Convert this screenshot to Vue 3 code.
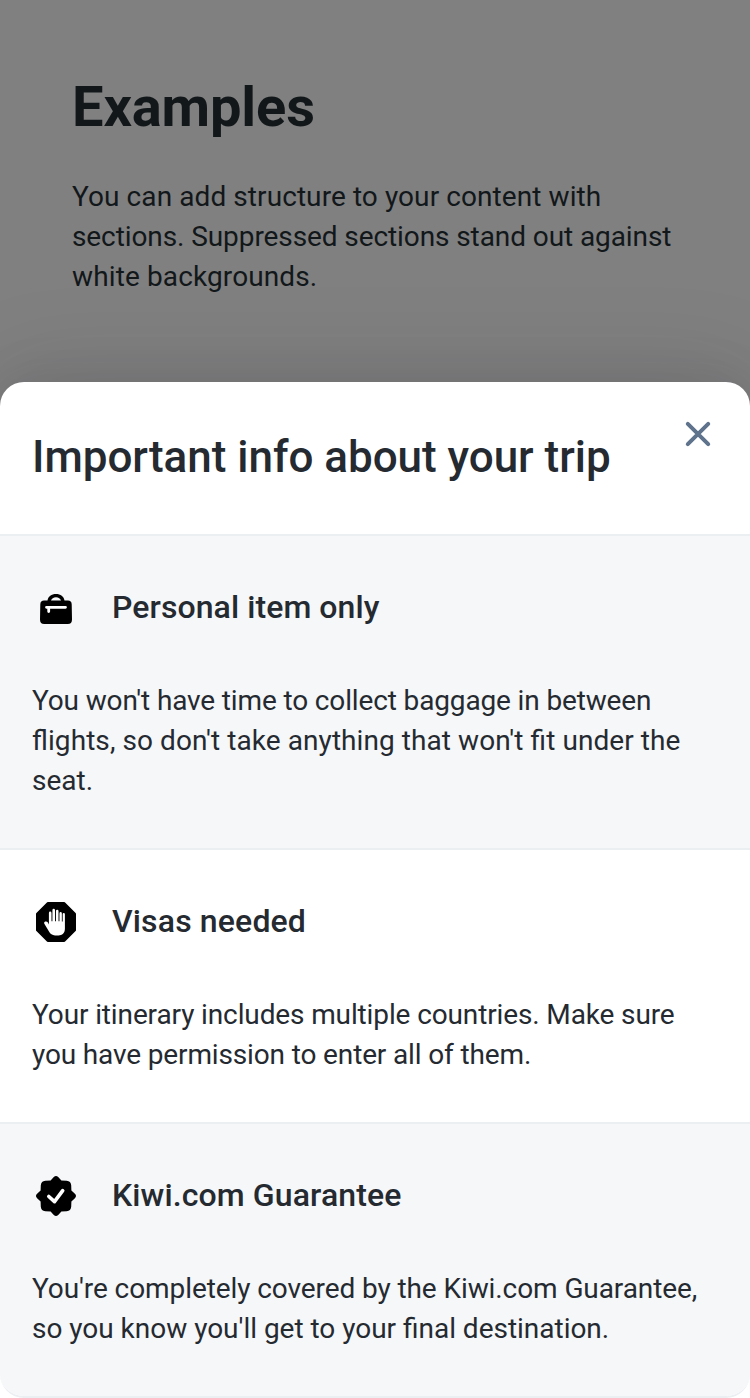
<script setup>
const intro = [
  { text: 'You can add structure to your content with', gap: 0.08 },
  { text: 'sections. Suppressed sections stand out against', gap: -0.09 },
  { text: 'white backgrounds.', gap: 0.12 },
]
const sections = [
  {
    icon: 'bag', title: 'Personal item only', gap: 0.08, soft: true,
    lines: [
      { text: "You won't have time to collect baggage in between", gap: -0.14 },
      { text: "flights, so don't take anything that won't fit under the", gap: 0.07 },
      { text: 'seat.', gap: 0 },
    ],
  },
  {
    icon: 'visa', title: 'Visas needed', gap: 0.15, soft: false,
    lines: [
      { text: 'Your itinerary includes multiple countries. Make sure', gap: -0.125 },
      { text: 'you have permission to enter all of them.', gap: -0.14 },
    ],
  },
  {
    icon: 'badge', title: 'Kiwi.com Guarantee', gap: 0.11, soft: true,
    lines: [
      { text: "You're completely covered by the Kiwi.com Guarantee,", gap: -0.09 },
      { text: "so you know you'll get to your final destination.", gap: -0.02 },
    ],
  },
]
const tracking = (gap) => ({ letterSpacing: `${gap}px` })
</script>

<template>
  <main class="page">
    <header class="intro">
      <h1>Examples</h1>
      <p><span v-for="line in intro" :key="line.text" class="row" :style="tracking(line.gap)">{{ line.text }}</span></p>
    </header>
    <div class="sheet">
      <div class="modal">
        <div class="head">
          <h2>Important info about your trip</h2>
          <svg class="close" viewBox="0 0 48 48"><path d="M13.800 13.800l20.400 20.400M34.200 13.800l-20.400 20.400" /></svg>
        </div>
        <section v-for="s in sections" :key="s.icon" :class="{ soft: s.soft }">
          <div class="title">
            <svg v-if="s.icon === 'bag'" viewBox="0 0 48 48">
              <path fill-rule="evenodd" d="M15.500 16.600C16 12.500 19.500 10 24 10s8 2.500 8.500 6.600H36q3.500 0 3.700 3.600L40 35.500q0 4.500-4.200 4.500H12.200Q8 40 8 35.500l.300-15.300q.200-3.600 3.700-3.600zM19 16.600h10c-.600-2-2.500-3.300-5-3.300s-4.400 1.300-5 3.300z" />
              <path class="zip" d="M14.500 23.300h19M16.700 23.500v4" />
            </svg>
            <svg v-else-if="s.icon === 'visa'" viewBox="0 0 48 48">
              <path d="M15.800 4h16.400q.500 0 .900.400L43.600 14.900q.400.400.400.900v16.400q0 .500-.400.900L33.100 43.600q-.400.400-.900.400H15.800q-.500 0-.900-.400L4.400 33.100q-.400-.400-.400-.900V15.800q0-.500.400-.900L14.900 4.400q.400-.400.900-.400z" />
              <path class="hand" transform="translate(.9 0) scale(.925 1)" d="M12.200 25.500q-.400-1.500 1-1.900 2-.500 3 1l1.100 2V15q0-1.400 1.400-1.400T20.100 15v8.300h1V12.200q0-1.400 1.400-1.400t1.400 1.400v11.100h1V13.200q0-1.400 1.400-1.400t1.400 1.400v10.100h1V15.400q0-1.300 1.300-1.300t1.300 1.300V23.500h.900v-7.200q0-1.300 1.200-1.300t1.200 1.300v14.400c0 4.500-3.100 6.700-6.900 6.700h-3.800c-3 0-5-1.300-6.500-3.800z" />
            </svg>
            <svg v-else viewBox="0 0 48 48">
              <path d="M21.800 5.100Q24 2.900 26.200 5.100L29.400 8.600 34.700 8.800Q38.900 9.100 39.200 13.300L39.400 18.600 42.900 21.800Q45.100 24 42.900 26.200L39.400 29.400 39.200 34.700Q38.900 38.900 34.700 39.200L29.400 39.400 26.200 42.900Q24 45.100 21.800 42.900L18.600 39.400 13.300 39.200Q9.100 38.900 8.800 34.700L8.600 29.400 5.100 26.200Q2.900 24 5.100 21.800L8.600 18.600 8.800 13.300Q9.100 9.100 13.300 8.800L18.600 8.600z" />
              <path class="check" d="M16.800 24.500l5.700 5.200 8.200-11" />
            </svg>
            <h3 :style="tracking(s.gap)">{{ s.title }}</h3>
          </div>
          <p><span v-for="line in s.lines" :key="line.text" class="row" :style="tracking(line.gap)">{{ line.text }}</span></p>
        </section>
      </div>
    </div>
  </main>
</template>

<style>
body { margin: 0; background: #808080; }
</style>
<style scoped>
.page { height: 1398px; overflow: hidden; font-family: Roboto, sans-serif; color: #252a31; }
h1, h2, h3, p { margin: 0; }
.row { display: block; white-space: nowrap; font-feature-settings: "liga" 1; }
.intro { height: 382px; box-sizing: border-box; padding: 75px 72px 0; color: #12171a; }
h1 { font-size: 56px; line-height: 64px; font-weight: 700; letter-spacing: -0.12px; }
p { font-size: 28px; line-height: 40px; }
.intro p { margin-top: 38px; }
.sheet { height: 1016px; background: #fff; border-radius: 24px 24px 0 0; box-shadow: 0 -4px 48px #252a311a, 0 -8px 96px #252a3120; }
.modal { height: 1016px; box-sizing: border-box; border-bottom: 2px solid #eceff2; border-radius: 24px; overflow: hidden; }
.head { height: 152px; display: flex; justify-content: space-between; padding: 0 28px 0 32px; }
h2 { font-size: 44px; line-height: 52px; font-weight: 500; margin-top: 49px; letter-spacing: -0.03px; }
.close { width: 48px; height: 48px; margin-top: 28px; fill: none; stroke: #5f738c; stroke-width: 4; stroke-linecap: round; }
section { padding: 48px 32px 47px; border-top: 2px solid #eceff2; }
.soft { background: #f5f7f9; }
.title { height: 48px; display: flex; gap: 32px; align-items: center; margin-bottom: 49px; }
.title svg { width: 48px; height: 48px; fill: #000; }
h3 { font-size: 32px; line-height: 40px; font-weight: 500; margin-bottom: 2px; }
.title .zip { fill: none; stroke: #fff; stroke-width: 2.8; stroke-linecap: round; }
.title .check { fill: none; stroke: #fff; stroke-width: 3.6; stroke-linecap: round; stroke-linejoin: round; }
.title .hand { fill: #fff; }
</style>
